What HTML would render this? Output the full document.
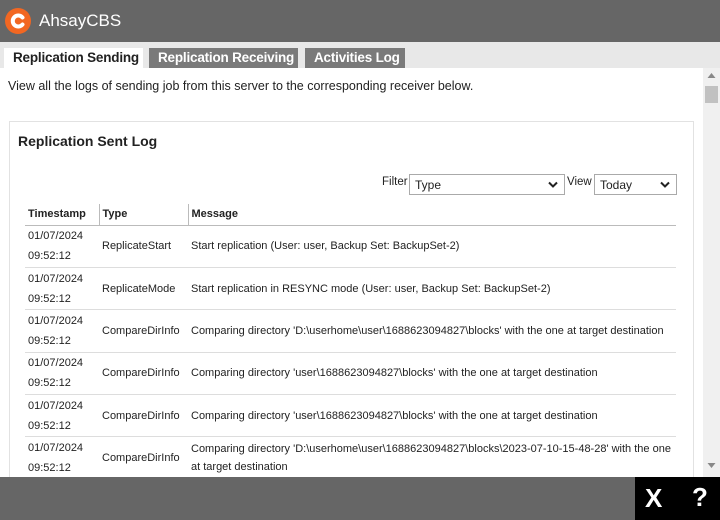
<!DOCTYPE html>
<html><head><style>
*{margin:0;padding:0;box-sizing:border-box}
body{width:720px;height:520px;overflow:hidden;font-family:"Liberation Sans",Arial,sans-serif;background:#fff;position:relative;color:#222}
.top{position:absolute;left:0;top:0;width:720px;height:42px;background:#666}
.logo{position:absolute;left:5px;top:8px;width:26px;height:26px;border-radius:50%;background:#f26722}
.brand{position:absolute;left:39px;top:11px;color:#fff;font-size:17px}
.tabs{position:absolute;left:0;top:42px;width:720px;height:26px;background:#e8e8e8}
.tab{position:absolute;top:6px;height:20px;font-size:13.5px;font-weight:bold;color:#fff;background:#7a7a7a;padding:2px 9px 0;white-space:nowrap;letter-spacing:-0.2px}
.tab.on{background:#fff;color:#222}
.main{position:absolute;left:0;top:68px;width:703px;height:409px;background:#fff;overflow:hidden}
.sb{position:absolute;left:703px;top:68px;width:17px;height:409px;background:#f0f0f0}
.thumb{position:absolute;left:2px;top:18px;width:13px;height:17px;background:#c1c1c1}
.intro{position:absolute;left:8px;top:11px;font-size:12.5px}
.panel{position:absolute;left:9px;top:53px;width:685px;height:400px;border:1px solid #e2e2e2}
.ptitle{position:absolute;left:8px;top:11px;font-size:14px;font-weight:bold}
.flt{position:absolute;top:54px;font-size:11.5px}
.sel{position:absolute;top:52px;height:21px;border:1px solid #aaa;font-size:12px;padding:3px 5px}
.sel svg{position:absolute;right:6px;top:6px}
table{position:absolute;left:15px;top:82px;width:651px;border-collapse:collapse;font-size:11px}
th{text-align:left;height:21px;font-weight:bold;padding-left:3px;border-bottom:1px solid #bbb}
th+th{border-left:1px solid #bbb}
td{height:42.4px;border-bottom:1px solid #ddd;padding-left:3px;line-height:20px;vertical-align:middle}
.bot{position:absolute;left:0;top:477px;width:720px;height:43px;background:#666}
.blk{position:absolute;left:635px;top:477px;width:85px;height:43px;background:#000;color:#fff;font-weight:bold;font-size:26px}
</style></head><body>
<div class="top"><div class="logo"><svg width="26" height="26"><path d="M17.5 9.5 A5.5 5.5 0 1 0 17.5 16.5" stroke="#fff" stroke-width="4" fill="none" stroke-linecap="round"/></svg></div><div class="brand">AhsayCBS</div></div>
<div class="tabs">
<div class="tab on" style="left:4px;width:139px">Replication Sending</div>
<div class="tab" style="left:149px;width:149px">Replication Receiving</div>
<div class="tab" style="left:305px;width:100px">Activities Log</div>
</div>
<div class="main">
<div class="intro">View all the logs of sending job from this server to the corresponding receiver below.</div>
<div class="panel">
<div class="ptitle">Replication Sent Log</div>
<div class="flt" style="left:372px">Filter</div>
<div class="sel" style="left:399px;width:156px">Type<svg width="10" height="8"><path d="M1 1.5 L5 5.5 L9 1.5" stroke="#222" stroke-width="2" fill="none"/></svg></div>
<div class="flt" style="left:557px">View</div>
<div class="sel" style="left:584px;width:83px">Today<svg width="10" height="8"><path d="M1 1.5 L5 5.5 L9 1.5" stroke="#222" stroke-width="2" fill="none"/></svg></div>
<table>
<tr><th style="width:74px">Timestamp</th><th style="width:89px">Type</th><th>Message</th></tr>
<tr><td>01/07/2024<br>09:52:12</td><td>ReplicateStart</td><td>Start replication (User: user, Backup Set: BackupSet-2)</td></tr>
<tr><td>01/07/2024<br>09:52:12</td><td>ReplicateMode</td><td>Start replication in RESYNC mode (User: user, Backup Set: BackupSet-2)</td></tr>
<tr><td>01/07/2024<br>09:52:12</td><td>CompareDirInfo</td><td>Comparing directory 'D:\userhome\user\1688623094827\blocks' with the one at target destination</td></tr>
<tr><td>01/07/2024<br>09:52:12</td><td>CompareDirInfo</td><td>Comparing directory 'user\1688623094827\blocks' with the one at target destination</td></tr>
<tr><td>01/07/2024<br>09:52:12</td><td>CompareDirInfo</td><td>Comparing directory 'user\1688623094827\blocks' with the one at target destination</td></tr>
<tr><td>01/07/2024<br>09:52:12</td><td>CompareDirInfo</td><td style="line-height:18px">Comparing directory 'D:\userhome\user\1688623094827\blocks\2023-07-10-15-48-28' with the one at target destination</td></tr>
</table>
</div>
</div>
<div class="sb"><svg width="17" height="409" style="position:absolute;left:0;top:0"><path d="M4.5 10 L8.5 5 L12.5 10Z" fill="#888"/><path d="M4.5 395 L8.5 400 L12.5 395Z" fill="#888"/></svg><div class="thumb"></div></div>
<div class="bot"></div>
<div class="blk"><span style="position:absolute;left:10px;top:6px">X</span><span style="position:absolute;left:57px;top:5px">?</span></div>
</body></html>
